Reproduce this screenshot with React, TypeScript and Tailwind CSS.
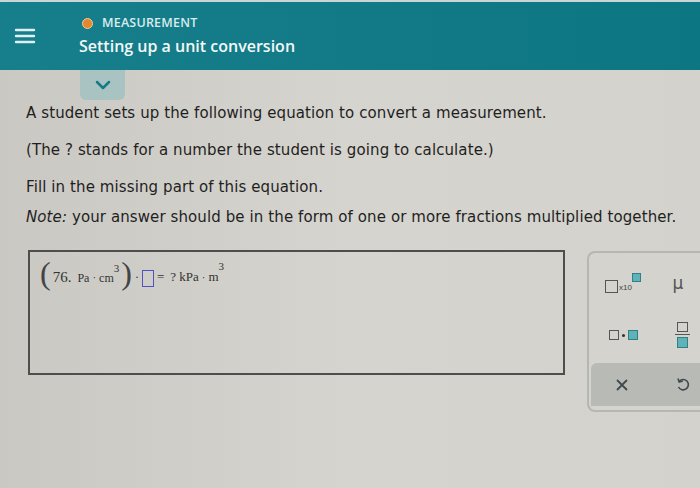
import React from 'react';

const Box = ({ filled, className = '' }: { filled?: boolean; className?: string }) => (
  <span
    className={`inline-block border ${filled ? 'border-[#2f7f86] bg-[#5fb3b8]' : 'border-[#555] bg-transparent'} ${className}`}
  />
);

const App: React.FC = () => {
  return (
    <div className="w-[700px] h-[488px] overflow-hidden bg-gradient-to-r from-[#cac8c2] via-[#d6d4ce] to-[#d3d2cc] font-['Open_Sans',sans-serif] text-[#222]">
      <div className="h-[2px] bg-[#c9d6d6]" />
      <header className="h-[68px] bg-gradient-to-r from-[#167f8b] to-[#0c7682] flex items-center">
        <div className="w-[50px] flex justify-center">
          <svg width="22" height="18" viewBox="0 0 22 18">
            <path d="M2 3h18M2 9h18M2 15h18" stroke="#dff0f0" strokeWidth="2.4" strokeLinecap="round" />
          </svg>
        </div>
        <div className="ml-[29px] flex flex-col">
          <div className="flex items-center gap-[9px] mt-[-2px] ml-[3px]">
            <span className="w-[11px] h-[11px] rounded-full bg-[#e3892c] border border-[#f3c9a0]" />
            <span className="text-[12.5px] font-semibold text-[#d8ecec] tracking-[0.2px]">MEASUREMENT</span>
          </div>
          <h1 className="text-[16px] font-semibold text-[#f4f8f8] leading-[20px] mt-[4px]">Setting up a unit conversion</h1>
        </div>
      </header>

      <div className="ml-[80px] w-[45px] h-[30px] bg-[#a9c3c2] rounded-b-[6px] flex items-center justify-center">
        <svg width="16" height="10" viewBox="0 0 16 10">
          <path d="M2 2l6 6 6-6" stroke="#157b87" strokeWidth="2.5" fill="none" strokeLinecap="round" strokeLinejoin="round" />
        </svg>
      </div>

      <div className="pl-[26px] text-[15px] leading-[20px] tracking-[0.1px] font-['DejaVu_Sans',sans-serif] text-[#1f1f1f]">
        <p className="mt-[3px]">A student sets up the following equation to convert a measurement.</p>
        <p className="mt-[17px]">(The ? stands for a number the student is going to calculate.)</p>
        <p className="mt-[17px]">Fill in the missing part of this equation.</p>
        <p className="mt-[10px]"><i>Note:</i> your answer should be in the form of one or more fractions multiplied together.</p>
      </div>

      <div className="flex mt-[23px] ml-[28px]">
        <div className="w-[537px] shrink-0 h-[125px] border-2 border-[#4e4e4c] px-[10px] pt-[6px] font-['Liberation_Serif',serif] text-[#333]">
          <div className="flex items-center h-[32px]">
            <span className="text-[32px] leading-none font-light text-[#444] mt-[-2px]">(</span>
            <span className="text-[15px] ml-[2px] mt-[6px]">76.</span>
            <span className="text-[12px] ml-[6px] mt-[8px]">Pa</span>
            <span className="text-[11px] mx-[3px] mt-[6px]">·</span>
            <span className="text-[12px] mt-[8px]">cm</span>
            <span className="text-[11px] self-start mt-[2px]">3</span>
            <span className="text-[32px] leading-none font-light text-[#444] ml-[2px] mt-[-2px]">)</span>
            <span className="text-[12px] mx-[3px] mt-[6px]">·</span>
            <span className="inline-block w-[12px] h-[17px] border-[1.5px] border-[#5050c8] mt-[8px]" />
            <span className="text-[13px] ml-[3px] mt-[6px]">=</span>
            <span className="text-[13px] ml-[6px] mt-[6px]">? kPa</span>
            <span className="text-[11px] mx-[3px] mt-[6px]">·</span>
            <span className="text-[13px] mt-[6px]">m</span>
            <span className="text-[11px] self-start mt-[0px]">3</span>
          </div>
        </div>

        <div className="ml-[22px] shrink-0 w-[130px] h-[161px] mt-[1px] border-2 border-[#b6b6b2] rounded-[8px] bg-[#d4d3cd] flex flex-col overflow-hidden">
          <div className="flex items-center h-[54px] pt-[6px]">
            <div className="w-[68px] flex items-end justify-center">
              <Box className="w-[13px] h-[13px] border-[1.5px]" />
              <span className="text-[8px] font-['Liberation_Sans',sans-serif] text-[#444] leading-none mb-[1px] ml-[1px]">x10</span>
              <Box filled className="w-[9px] h-[9px] mb-[11px]" />
            </div>
            <div className="w-[42px] text-center text-[17px] text-[#555] font-['DejaVu_Sans',sans-serif] leading-none">μ</div>
          </div>
          <div className="flex items-center h-[56px]">
            <div className="w-[68px] flex items-center justify-center gap-[3px]">
              <Box className="w-[10px] h-[10px] border-[1.5px]" />
              <span className="w-[3px] h-[3px] rounded-full bg-[#333]" />
              <Box filled className="w-[10px] h-[10px]" />
            </div>
            <div className="w-[42px] flex flex-col items-center gap-[2px] ml-[4px]">
              <Box className="w-[11px] h-[10px] border-[1.5px]" />
              <span className="w-[15px] h-[1.5px] bg-[#555]" />
              <Box filled className="w-[11px] h-[11px]" />
            </div>
          </div>
          <div className="mx-[2px] flex-1 bg-[#b8bab6] rounded-t-[6px] flex items-center mb-[4px]">
            <div className="w-[62px] flex justify-center">
              <svg width="14" height="14" viewBox="0 0 14 14">
                <path d="M2 2l10 10M12 2L2 12" stroke="#3f4a4f" strokeWidth="1.8" />
              </svg>
            </div>
            <div className="w-[60px] flex justify-center">
              <svg width="14" height="16" viewBox="0 0 14 16">
                <path d="M3 4.5A5.2 5.2 0 1 1 2.5 10" stroke="#3f4a4f" strokeWidth="1.6" fill="none" />
                <path d="M2 1.5l1.2 3.6 3.6-1" stroke="#3f4a4f" strokeWidth="1.6" fill="none" />
              </svg>
            </div>
          </div>
        </div>
      </div>
    </div>
  );
};

export default App;
